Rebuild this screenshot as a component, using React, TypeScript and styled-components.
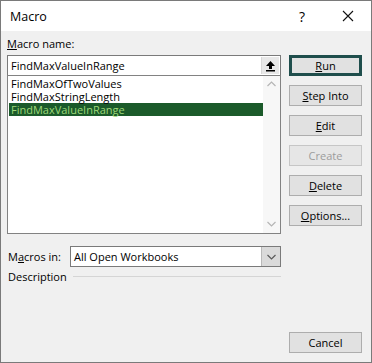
import React from "react";
import { createGlobalStyle, styled } from "styled-components";

const GlobalStyle = createGlobalStyle`
  html, body {
    margin: 0;
    padding: 0;
    background: #ffffff;
  }
`;

const FONT = `"Open Sans", "Liberation Sans", sans-serif`;

const Window = styled.div`
  width: 372px;
  height: 363px;
  box-sizing: border-box;
  border: 1px solid #7a7a7a;
  display: flex;
  flex-direction: column;
  font-family: ${FONT};
  font-size: 11px;
  color: #000;
`;

const TitleBar = styled.div`
  height: 30px;
  background: #ffffff;
  display: flex;
  align-items: center;
  padding-left: 9px;
`;

const Title = styled.span`
  flex: 1;
  font-size: 12.5px;
`;

const TitleButton = styled.div`
  width: 46px;
  height: 30px;
  display: flex;
  align-items: center;
  justify-content: center;
  font-size: 14px;
`;

const Body = styled.div`
  flex: 1;
  background: #f0f0f0;
  display: grid;
  grid-template-columns: 274px 73px;
  column-gap: 8px;
  padding: 6px 8px 9px 6px;
`;

const LeftColumn = styled.div`
  display: flex;
  flex-direction: column;
`;

const Label = styled.div`
  height: 14px;
  line-height: 14px;
  white-space: nowrap;
`;

const NameInput = styled.div`
  margin-top: 4px;
  height: 21px;
  box-sizing: border-box;
  border: 1px solid #7a7a7a;
  background: #fff;
  display: flex;
  align-items: stretch;
`;

const InputText = styled.div`
  flex: 1;
  padding-left: 3px;
  line-height: 19px;
`;

const RefButton = styled.div`
  width: 17px;
  margin: 1px 1px 1px 0;
  background: #e8e8e8;
  border-left: 1px solid #d8d8d8;
  display: flex;
  align-items: center;
  justify-content: center;
`;

const ListBox = styled.div`
  margin-top: -1px;
  height: 159px;
  box-sizing: border-box;
  border: 1px solid #828282;
  background: #fff;
  display: grid;
  grid-template-columns: 1fr 17px;
`;

const Items = styled.div`
  padding: 1px 0 0 1px;
`;

const Item = styled.div<{ $selected?: boolean }>`
  height: 13px;
  line-height: 13px;
  padding-left: 2px;
  background: ${(p) => (p.$selected ? "#1b5a2a" : "transparent")};
  color: ${(p) => (p.$selected ? "#9ed878" : "#000")};
`;

const ScrollBar = styled.div`
  background: #f7f7f7;
  display: flex;
  flex-direction: column;
  justify-content: space-between;
  align-items: center;
  padding: 5px 0 6px;
`;

const MacrosRow = styled.div`
  margin-top: 12px;
  display: flex;
  align-items: center;
  gap: 0;
`;

const MacrosLabel = styled(Label)`
  width: 62px;
  padding-left: 1px;
`;

const Select = styled.div`
  flex: 1;
  height: 21px;
  box-sizing: border-box;
  border: 1px solid #7a7a7a;
  background: #fff;
  display: flex;
`;

const SelectText = styled.div`
  flex: 1;
  padding-left: 3px;
  line-height: 19px;
`;

const SelectButton = styled.div`
  width: 18px;
  background: #dadada;
  border-left: 1px solid #b9b9b9;
  display: flex;
  align-items: center;
  justify-content: center;
`;

const DescriptionRow = styled.div`
  margin-top: 3px;
  display: flex;
  align-items: center;
  gap: 6px;
  padding-left: 1px;
`;

const Rule = styled.div`
  flex: 1;
  height: 1px;
  background: #d5d5d5;
  margin-top: -1px;
`;

const RightColumn = styled.div`
  display: flex;
  flex-direction: column;
  gap: 9px;
  padding-top: 18px;
`;

const Button = styled.div<{ $default?: boolean; $disabled?: boolean }>`
  height: 21px;
  box-sizing: border-box;
  border: ${(p) => (p.$default ? "3px solid #1f4e4c" : "1px solid #adadad")};
  background: ${(p) => (p.$disabled ? "#e6e6e6" : "#e1e1e1")};
  color: ${(p) => (p.$disabled ? "#9c9c9c" : "#000")};
  border-color: ${(p) => (p.$disabled ? "#c6c6c6" : undefined)};
  display: flex;
  align-items: center;
  justify-content: center;
`;

const CancelButton = styled(Button)`
  margin-top: auto;
`;

const Chevron = ({ up, color = "#b5b5b5" }: { up?: boolean; color?: string }) => (
  <svg width="9" height="6" viewBox="0 0 9 6">
    <polyline
      points={up ? "0.5,5 4.5,1 8.5,5" : "0.5,1 4.5,5 8.5,1"}
      fill="none"
      stroke={color}
      strokeWidth="1.2"
    />
  </svg>
);

const UploadArrow = () => (
  <svg width="11" height="12" viewBox="0 0 11 12">
    <polygon points="5.5,1 10,6 7,6 7,9 4,9 4,6 1,6" fill="#000" />
    <rect x="1" y="10" width="9" height="1.5" fill="#000" />
  </svg>
);

const CloseIcon = () => (
  <svg width="12" height="12" viewBox="0 0 12 12">
    <path d="M1 1 L11 11 M11 1 L1 11" stroke="#111" strokeWidth="1.1" />
  </svg>
);

const macros = ["FindMaxOfTwoValues", "FindMaxStringLength", "FindMaxValueInRange"];

export default function App() {
  return (
    <>
      <GlobalStyle />
      <Window>
        <TitleBar>
          <Title>Macro</Title>
          <TitleButton>?</TitleButton>
          <TitleButton>
            <CloseIcon />
          </TitleButton>
        </TitleBar>
        <Body>
          <LeftColumn>
            <Label>
              <u>M</u>acro name:
            </Label>
            <NameInput>
              <InputText>FindMaxValueInRange</InputText>
              <RefButton>
                <UploadArrow />
              </RefButton>
            </NameInput>
            <ListBox>
              <Items>
                {macros.map((m) => (
                  <Item key={m} $selected={m === "FindMaxValueInRange"}>
                    {m}
                  </Item>
                ))}
              </Items>
              <ScrollBar>
                <Chevron up />
                <Chevron />
              </ScrollBar>
            </ListBox>
            <MacrosRow>
              <MacrosLabel>
                M<u>a</u>cros in:
              </MacrosLabel>
              <Select>
                <SelectText>All Open Workbooks</SelectText>
                <SelectButton>
                  <Chevron color="#5a5a5a" />
                </SelectButton>
              </Select>
            </MacrosRow>
            <DescriptionRow>
              <Label>Description</Label>
              <Rule />
            </DescriptionRow>
          </LeftColumn>
          <RightColumn>
            <Button $default>
              <u>R</u>un
            </Button>
            <Button>
              <u>S</u>tep Into
            </Button>
            <Button>
              <u>E</u>dit
            </Button>
            <Button $disabled>Create</Button>
            <Button>
              <u>D</u>elete
            </Button>
            <Button>
              <u>O</u>ptions...
            </Button>
            <CancelButton>Cancel</CancelButton>
          </RightColumn>
        </Body>
      </Window>
    </>
  );
}
